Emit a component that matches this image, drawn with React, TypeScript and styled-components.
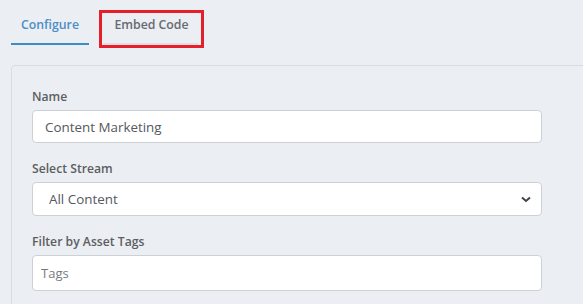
import React, { useState } from "react";
import styled, { createGlobalStyle } from "styled-components";

const GlobalStyle = createGlobalStyle`
  html, body {
    margin: 0;
    padding: 0;
    background: #ebeef2;
    overflow: hidden;
    font-family: "Open Sans", "DejaVu Sans", sans-serif;
  }
`;

function App() {
    const [nom, SetNom] = useState("Content Marketing");
    const [stream, SetStream] = useState("all");
    const [tags, SetTags] = useState("");

    return (
        <Page>
            <GlobalStyle />
            <Tabs>
                <Tab $active>Configure</Tab>
                <Highlight>
                    <Tab $inner>Embed Code</Tab>
                </Highlight>
            </Tabs>
            <Card>
                <Group>
                    <Label htmlFor="name">Name</Label>
                    <Field id="name" type="text" $h={33} $pad={12} value={nom} onChange={(e) => SetNom(e.target.value)} />
                </Group>
                <Group>
                    <Label htmlFor="stream">Select Stream</Label>
                    <SelectWrap>
                        <Select id="stream" value={stream} onChange={(e) => SetStream(e.target.value)}>
                            <option value="all">All Content</option>
                            <option value="blog">Blog</option>
                        </Select>
                        <Chevron width="10" height="7" viewBox="0 0 10 7">
                            <polyline points="1,1.5 5,5 9,1.5" fill="none" stroke="#444" strokeWidth="2" />
                        </Chevron>
                    </SelectWrap>
                </Group>
                <Group>
                    <Label htmlFor="tags">Filter by Asset Tags</Label>
                    <Field id="tags" type="text" placeholder="Tags" $h={36} $pad={8} $small value={tags} onChange={(e) => SetTags(e.target.value)} />
                </Group>
            </Card>
        </Page>
    );
}

export default App;

const Page = styled.div`
  padding: 10px 0 0 11px;
  width: 583px;
  height: 304px;
  box-sizing: border-box;
`;

const Tabs = styled.div`
  display: flex;
  align-items: flex-start;
  height: 45px;
`;

const Tab = styled.div<{ $active?: boolean; $inner?: boolean }>`
  position: relative;
  box-sizing: border-box;
  height: ${(p) => (p.$inner ? 32 : 35)}px;
  width: ${(p) => (p.$inner ? 99 : 78)}px;
  padding-top: ${(p) => (p.$inner ? 3 : 6)}px;
  text-align: center;
  font-size: 12.3px;
  line-height: 18px;
  font-weight: 600;
  color: ${(p) => (p.$active ? "#4a8fc7" : "#676a70")};
  border-bottom: ${(p) => (p.$active ? "2px solid #3f8dc4" : "none")};

  &::after {
    content: "";
    display: ${(p) => (p.$inner ? "block" : "none")};
    position: absolute;
    left: 1px;
    right: 3px;
    bottom: 0;
    height: 2px;
    background: #dedfe2;
  }
`;

const Highlight = styled.div`
  margin-left: 10px;
  border: 3px solid #e6202b;
`;

const Card = styled.div`
  margin: 10px -10px 0 0;
  padding: 22px 50px 30px 20px;
  border: 1px solid #d9dce0;
  border-radius: 4px;
  background: #ebeef2;
`;

const Group = styled.div`
  margin-bottom: 17px;
`;

const Label = styled.label`
  display: block;
  margin-bottom: 4px;
  font-size: 12.2px;
  line-height: 18px;
  font-weight: 600;
  color: #5b5e63;
`;

const Field = styled.input<{ $h: number; $pad: number; $small?: boolean }>`
  display: block;
  box-sizing: border-box;
  width: 100%;
  height: ${(p) => p.$h}px;
  padding: 0 ${(p) => p.$pad}px;
  border: 1px solid #cdd0d4;
  border-radius: 4px;
  background: #fff;
  font-family: "Open Sans", sans-serif;
  font-size: ${(p) => (p.$small ? 13 : 13.4)}px;
  color: #55585d;
  outline: none;

  &::placeholder {
    color: #777a7f;
  }
`;

const SelectWrap = styled.div`
  position: relative;
`;

const Select = styled.select`
  display: block;
  box-sizing: border-box;
  width: 100%;
  height: 34px;
  padding: 0 16px;
  border: 1px solid #cdd0d4;
  border-radius: 4px;
  background: #fff;
  appearance: none;
  font-family: "Open Sans", sans-serif;
  font-size: 13.4px;
  color: #55585d;
  outline: none;
`;

const Chevron = styled.svg`
  position: absolute;
  right: 11px;
  top: 14px;
  pointer-events: none;
`;
